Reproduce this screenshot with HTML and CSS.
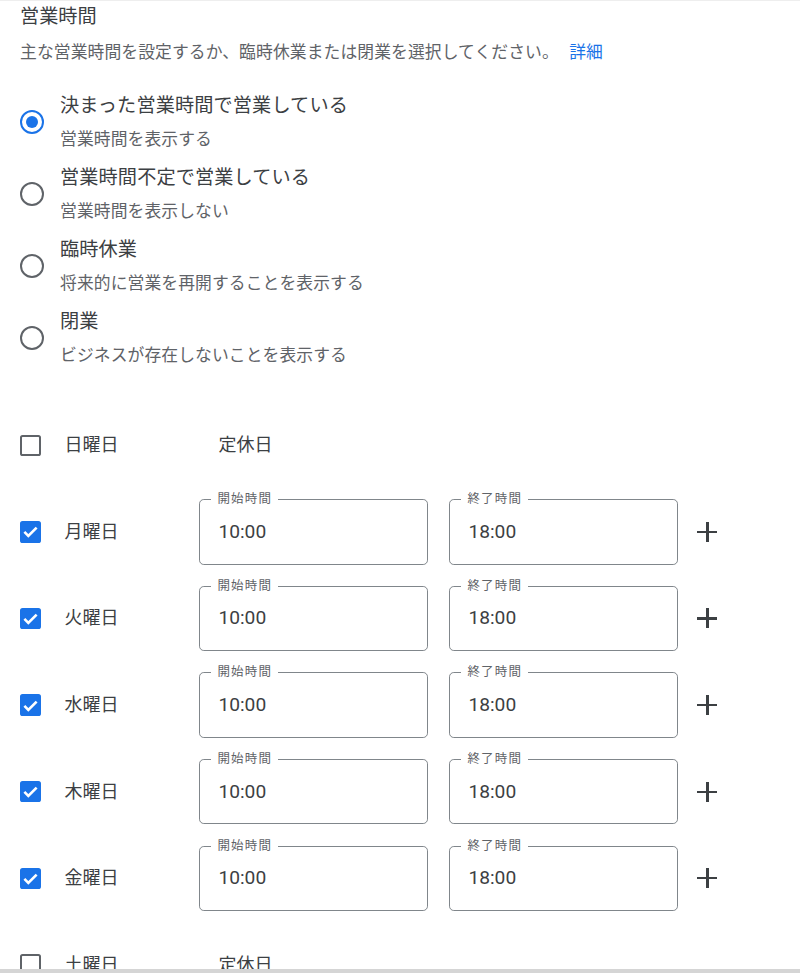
FILE: index.html
```html
<!DOCTYPE html>
<html lang="ja">
<head>
<meta charset="utf-8">
<title>営業時間</title>
<link rel="stylesheet" href="styles.css">
</head>
<body>
<div class="topline"></div>
<main class="page">
  <h1 class="title">営業時間</h1>
  <p class="desc">主な営業時間を設定するか、臨時休業または閉業を選択してください。 <a class="link" href="#">詳細</a></p>

  <div class="radios">
    <div class="radio-item">
      <span class="radio checked"></span>
      <div class="radio-text">
        <div class="radio-title">決まった営業時間で営業している</div>
        <div class="radio-sub">営業時間を表示する</div>
      </div>
    </div>
    <div class="radio-item">
      <span class="radio"></span>
      <div class="radio-text">
        <div class="radio-title">営業時間不定で営業している</div>
        <div class="radio-sub">営業時間を表示しない</div>
      </div>
    </div>
    <div class="radio-item">
      <span class="radio"></span>
      <div class="radio-text">
        <div class="radio-title">臨時休業</div>
        <div class="radio-sub">将来的に営業を再開することを表示する</div>
      </div>
    </div>
    <div class="radio-item">
      <span class="radio"></span>
      <div class="radio-text">
        <div class="radio-title">閉業</div>
        <div class="radio-sub">ビジネスが存在しないことを表示する</div>
      </div>
    </div>
  </div>

  <div class="days">
    <div class="day-row">
      <span class="check"></span>
      <span class="day-label">日曜日</span>
      <span class="closed">定休日</span>
    </div>
    <div class="day-row">
      <span class="check checked"><svg viewBox="0 0 24 24" class="tick"><path d="M5 12.5l4.5 4.5 9.5-9.5"/></svg></span>
      <span class="day-label">月曜日</span>
      <div class="field"><span class="field-label">開始時間</span><span class="field-value">10:00</span></div>
      <div class="field"><span class="field-label">終了時間</span><span class="field-value">18:00</span></div>
      <span class="plus"></span>
    </div>
    <div class="day-row">
      <span class="check checked"><svg viewBox="0 0 24 24" class="tick"><path d="M5 12.5l4.5 4.5 9.5-9.5"/></svg></span>
      <span class="day-label">火曜日</span>
      <div class="field"><span class="field-label">開始時間</span><span class="field-value">10:00</span></div>
      <div class="field"><span class="field-label">終了時間</span><span class="field-value">18:00</span></div>
      <span class="plus"></span>
    </div>
    <div class="day-row">
      <span class="check checked"><svg viewBox="0 0 24 24" class="tick"><path d="M5 12.5l4.5 4.5 9.5-9.5"/></svg></span>
      <span class="day-label">水曜日</span>
      <div class="field"><span class="field-label">開始時間</span><span class="field-value">10:00</span></div>
      <div class="field"><span class="field-label">終了時間</span><span class="field-value">18:00</span></div>
      <span class="plus"></span>
    </div>
    <div class="day-row">
      <span class="check checked"><svg viewBox="0 0 24 24" class="tick"><path d="M5 12.5l4.5 4.5 9.5-9.5"/></svg></span>
      <span class="day-label">木曜日</span>
      <div class="field"><span class="field-label">開始時間</span><span class="field-value">10:00</span></div>
      <div class="field"><span class="field-label">終了時間</span><span class="field-value">18:00</span></div>
      <span class="plus"></span>
    </div>
    <div class="day-row">
      <span class="check checked"><svg viewBox="0 0 24 24" class="tick"><path d="M5 12.5l4.5 4.5 9.5-9.5"/></svg></span>
      <span class="day-label">金曜日</span>
      <div class="field"><span class="field-label">開始時間</span><span class="field-value">10:00</span></div>
      <div class="field"><span class="field-label">終了時間</span><span class="field-value">18:00</span></div>
      <span class="plus"></span>
    </div>
    <div class="day-row">
      <span class="check"></span>
      <span class="day-label">土曜日</span>
      <span class="closed">定休日</span>
    </div>
  </div>
</main>
<div class="bottomline"></div>
</body>
</html>
```
FILE: styles.css
```css
html, body {
  margin: 0;
  padding: 0;
  background: #ffffff;
  height: 973px;
  overflow: hidden;
}
body {
  position: relative;
  font-family: Roboto, "Noto Sans CJK JP", sans-serif;
  color: #3c4043;
}
.topline {
  height: 1px;
  background: #eeeeee;
}
.page {
  padding-left: 20px;
}
.title {
  margin: 0;
  font-size: 19.2px;
  font-weight: 400;
  line-height: 31px;
  color: #3c4043;
}
.desc {
  margin: 8px 0 0;
  font-size: 16.8px;
  line-height: 24px;
  letter-spacing: 0.1px;
  color: #5f6368;
}
.link {
  color: #1a73e8;
  text-decoration: none;
  margin-left: 6px;
}
.radios {
  margin-top: 27px;
  display: flex;
  flex-direction: column;
  gap: 10px;
}
.radio-item {
  display: flex;
  align-items: center;
  height: 62px;
}
.radio {
  box-sizing: border-box;
  width: 24px;
  height: 24px;
  border-radius: 50%;
  border: 2.4px solid #5f6368;
  flex: none;
  display: flex;
  align-items: center;
  justify-content: center;
}
.radio.checked {
  border-color: #1a73e8;
}
.radio.checked::after {
  content: "";
  width: 12px;
  height: 12px;
  border-radius: 50%;
  background: #1a73e8;
}
.radio-text {
  margin-left: 16px;
}
.radio-title {
  font-size: 19.2px;
  line-height: 30px;
  letter-spacing: 0.1px;
  color: #3c4043;
}
.radio-sub {
  margin-top: 4px;
  font-size: 16.8px;
  line-height: 28px;
  letter-spacing: 0.1px;
  color: #5f6368;
}
.days {
  margin-top: 33px;
}
.day-row {
  display: flex;
  align-items: center;
  height: 86.6px;
}
.check {
  box-sizing: border-box;
  width: 21.4px;
  height: 21.4px;
  border: 2.4px solid #5f6368;
  border-radius: 2.6px;
  flex: none;
  display: flex;
  align-items: center;
  justify-content: center;
}
.check.checked {
  background: #1a73e8;
  border-color: #1a73e8;
}
.tick {
  width: 21px;
  height: 21px;
  flex: none;
  fill: none;
  stroke: #ffffff;
  stroke-width: 3;
}
.day-label {
  margin-left: 23px;
  width: 135px;
  flex: none;
  font-size: 18px;
  line-height: 24px;
  color: #3c4043;
}
.closed {
  margin-left: 19px;
  font-size: 18px;
  line-height: 24px;
  color: #3c4043;
}
.field {
  position: relative;
  box-sizing: border-box;
  width: 229px;
  height: 65.5px;
  border: 1.3px solid #80868b;
  border-radius: 4.8px;
  margin-right: 21px;
  display: flex;
  align-items: center;
  padding-left: 18px;
  flex: none;
}
.field-label {
  position: absolute;
  left: 11px;
  top: -10px;
  padding: 0 6px;
  background: #ffffff;
  font-size: 12.5px;
  line-height: 18px;
  letter-spacing: 1.2px;
  color: #5f6368;
}
.field-value {
  font-family: Roboto, sans-serif;
  font-size: 19.2px;
  line-height: 24px;
  color: #3c4043;
}
.plus {
  position: relative;
  width: 20px;
  height: 20px;
  margin-left: -2px;
  flex: none;
}
.plus::before, .plus::after {
  content: "";
  position: absolute;
  background: #3c4043;
}
.plus::before {
  left: 0;
  right: 0;
  top: 9px;
  height: 2.2px;
}
.plus::after {
  top: 0;
  bottom: 0;
  left: 9px;
  width: 2.2px;
}
.bottomline {
  position: absolute;
  left: 0;
  right: 0;
  top: 969px;
  height: 4px;
  background: #d5d5d5;
}
```
